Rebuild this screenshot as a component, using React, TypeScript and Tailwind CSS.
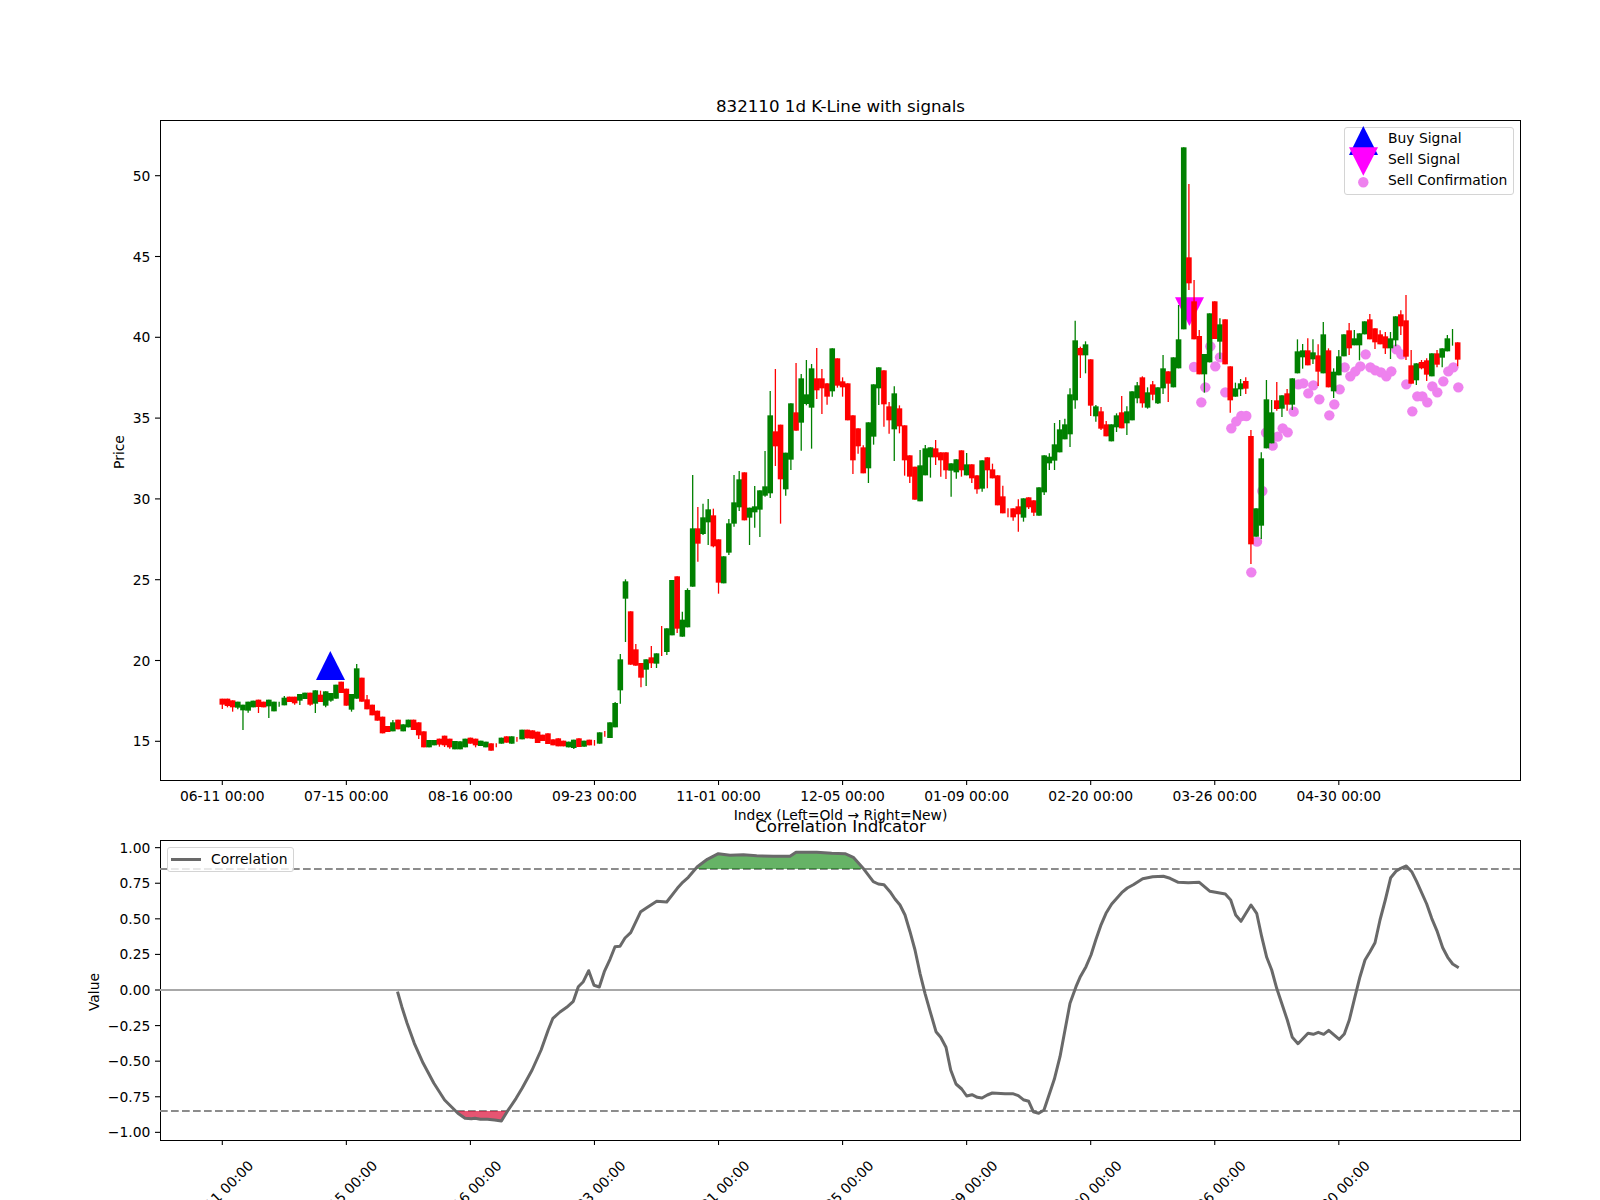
import React from 'react';

type Row = [string, number, number, number?, number?];
type Pt = [number, number];

const STEP = 5.169;
const X0 = 222.3;
const cx = (i: number) => X0 + STEP * i;

const TICK_X = [0, 24, 48, 72, 96, 120, 144, 168, 192, 216].map(cx);
const DATES = [
  '06-11 00:00', '07-15 00:00', '08-16 00:00', '09-23 00:00', '11-01 00:00',
  '12-05 00:00', '01-09 00:00', '02-20 00:00', '03-26 00:00', '04-30 00:00',
];

// rows are [colour, bodyTop, bodyBottom, wickTop, wickBottom], measured in chunks
const chunkA: Row[] = [
  ['r', 296, 314, 0, 327], ['r', 296, 318, 0, 322], ['r', 301, 322, 0, 335], ['g', 305, 323, 0, 328],
  ['g', 314, 331, 0, 390], ['g', 305, 332, 0, 338], ['g', 302, 322], ['r', 299, 321, 0, 339],
  ['r', 305, 322], ['g', 299, 319, 0, 354], ['g', 305, 334], ['g', 312, 312, 305, 320],
  ['g', 293, 316, 288], ['r', 290, 306], ['r', 290, 310, 0, 314], ['g', 282, 302, 0, 315],
  ['g', 278, 297], ['r', 278, 314, 0, 317], ['g', 271, 311, 0, 339], ['r', 284, 306, 272],
  ['g', 274, 317, 0, 322], ['g', 279, 302, 0, 305], ['g', 254, 296], ['r', 245, 279],
  ['r', 266, 317], ['g', 282, 329, 0, 335], ['g', 205, 296, 192], ['r', 233, 305],
  ['r', 298, 328, 285], ['r', 314, 346], ['r', 332, 362], ['r', 350, 400],
  ['r', 378, 396], ['g', 367, 394, 360], ['r', 359, 388], ['g', 373, 394],
  ['g', 359, 382], ['r', 359, 390], ['r', 367, 406, 0, 417], ['r', 394, 442],
  ['g', 420, 442], ['g', 420, 436], ['r', 416, 434, 0, 440], ['r', 407, 436, 0, 441],
  ['r', 416, 442, 0, 446], ['g', 423, 448], ['g', 424, 448], ['g', 416, 442],
  ['r', 413, 431], ['r', 416, 436, 0, 442], ['g', 422, 438], ['g', 425, 442],
  ['r', 430, 452], ['r', 436, 436, 430, 442], ['g', 413, 431], ['r', 409, 428],
  ['g', 409, 431], ['r', 418, 418, 411, 425], ['g', 389, 418], ['r', 389, 415],
  ['r', 391, 416], ['r', 395, 429], ['r', 404, 423], ['r', 400, 432],
  ['r', 418, 436], ['r', 415, 439], ['r', 422, 439], ['g', 425, 442],
  ['g', 419, 444, 0, 447], ['r', 415, 441], ['g', 422, 440], ['r', 419, 436],
  ['r', 428, 428, 420, 437], ['g', 397, 431], ['r', 401, 401, 393, 410], ['g', 367, 414],
  ['g', 309, 382, 306], ['g', 178, 271, 162, 311],
];
const chunkB: Row[] = [
  ['g', 34, 86, 28, 216], ['r', 124, 284], ['r', 238, 287, 222], ['r', 279, 323, 0, 352],
  ['g', 268, 299, 0, 348], ['r', 262, 280, 228, 294], ['g', 250, 281, 0, 294], ['r', 213, 213, 168, 258],
  ['g', 175, 246, 0, 255], ['g', 30, 196], ['r', 19, 176, 0, 189], ['g', 149, 200, 125],
  ['g', 60, 172, 55],
];
const chunkC: Row[] = [
  ['g', 565, 740, 405], ['r', 565, 611, 501, 665], ['g', 532, 582, 491, 585], ['g', 508, 547, 477, 615],
  ['r', 526, 619, 506, 622], ['r', 598, 728, 0, 761], ['g', 649, 730], ['g', 550, 638, 537, 645],
  ['g', 487, 551, 405, 560], ['g', 418, 502, 393, 513], ['r', 397, 541], ['g', 503, 533, 0, 615],
  ['g', 499, 517, 438, 563], ['g', 451, 509, 0, 591], ['g', 439, 467, 333, 470], ['g', 226, 460, 153, 474],
  ['r', 274, 319, 87, 378], ['r', 254, 418, 0, 551], ['g', 338, 448, 0, 467], ['g', 190, 359, 0, 390],
  ['r', 217, 272, 69], ['g', 115, 248, 102, 332], ['g', 163, 192, 60, 196], ['g', 85, 203, 72, 326],
  ['r', 115, 151, 24, 177], ['r', 115, 145, 87, 222], ['r', 130, 170, 0, 194], ['g', 25, 154, 0, 170],
  ['r', 55, 137, 0, 143], ['r', 124, 142, 112, 170], ['r', 130, 241], ['r', 226, 361, 0, 402],
  ['r', 265, 319, 0, 341], ['r', 322, 400, 316], ['g', 247, 385, 0, 429], ['g', 133, 290, 0, 314],
  ['g', 82, 145, 0, 195], ['r', 91, 193, 0, 260], ['r', 199, 241, 186, 281], ['g', 160, 268, 139, 363],
];
const chunkD: Row[] = [
  ['r', 325, 379, 316, 400], ['r', 376, 481, 0, 527], ['r', 466, 530, 0, 549], ['r', 500, 599],
  ['g', 496, 604, 450], ['g', 445, 526, 435], ['g', 442, 472, 0, 533], ['r', 445, 472, 420, 495],
  ['r', 457, 481, 0, 530], ['r', 457, 511, 0, 537], ['g', 490, 512, 0, 590], ['g', 478, 517, 0, 536],
  ['r', 451, 511, 0, 530], ['g', 493, 526, 459], ['r', 493, 535, 0, 549], ['r', 526, 568, 0, 581],
  ['g', 481, 566, 0, 575], ['r', 472, 511, 0, 565], ['r', 508, 535, 491], ['r', 526, 616],
  ['r', 589, 640, 557], ['r', 640, 640, 625, 652], ['r', 625, 652, 0, 662], ['r', 619, 643, 598, 695],
  ['g', 595, 653, 0, 665], ['r', 592, 622, 0, 627], ['r', 601, 638, 0, 648], ['g', 562, 647],
  ['g', 466, 577, 0, 585], ['g', 470, 490, 460, 510], ['g', 433, 482, 369, 510], ['g', 388, 457, 360],
  ['g', 373, 418, 356], ['g', 283, 403, 265, 441], ['g', 121, 301, 62, 326], ['r', 144, 166, 140, 234],
  ['g', 133, 166, 124, 220], ['r', 178, 317, 0, 348], ['g', 319, 349, 315, 365], ['r', 334, 386, 321, 390],
  ['r', 373, 409, 363], ['g', 373, 424], ['g', 346, 382, 340, 396], ['r', 337, 385, 288],
  ['g', 334, 370, 319, 405], ['g', 274, 361], ['g', 256, 295, 246, 310], ['r', 232, 310, 229, 323],
  ['g', 277, 323, 262, 326], ['r', 253, 284, 243, 301], ['g', 262, 310, 0, 312],
];
const chunkE: Row[] = [
  ['g', 745, 805, 705, 822], ['r', 754, 791, 0, 846], ['g', 712, 802], ['g', 658, 745, 555],
  ['g', 82, 628], ['r', 412, 490, 192, 510], ['r', 544, 658, 480],
];
const chunkF: Row[] = [
  ['r', 168, 283, 150], ['g', 222, 283, 0, 338], ['g', 100, 247], ['r', 64, 177],
  ['g', 133, 185, 115, 237], ['r', 118, 253], ['r', 259, 361, 0, 398], ['g', 325, 350, 308],
  ['g', 310, 328, 297, 348], ['r', 303, 326, 292, 342], ['r', 468, 793, 450, 852], ['g', 685, 770],
  ['g', 535, 737, 517, 777], ['g', 358, 505, 300], ['g', 397, 490, 360], ['r', 361, 387, 306, 392],
  ['g', 346, 386, 0, 411], ['r', 340, 374, 327, 392], ['g', 295, 374, 0, 390], ['g', 214, 280, 178],
  ['g', 211, 232, 192, 266], ['r', 211, 256, 175], ['g', 217, 238, 178, 252], ['r', 226, 275, 193, 318],
  ['g', 163, 280, 126], ['r', 211, 322, 205], ['g', 275, 334, 265, 354], ['g', 229, 286, 210],
  ['g', 163, 229], ['r', 151, 205, 129, 225], ['g', 175, 196, 150], ['g', 160, 196, 0, 241],
  ['g', 124, 163], ['r', 118, 178, 102], ['r', 145, 187, 0, 207], ['r', 163, 193, 151],
  ['r', 169, 205, 156, 222], ['g', 175, 205, 156, 237], ['g', 109, 181, 0, 199], ['r', 103, 139, 91, 165],
  ['r', 121, 230, 45, 240], ['r', 256, 311, 210], ['g', 250, 301, 0, 315], ['r', 246, 265, 240, 268],
  ['r', 241, 284, 235, 303], ['g', 220, 289], ['r', 220, 254, 210, 262], ['g', 205, 233, 0, 262],
  ['g', 175, 214, 165], ['g', 172, 172, 147, 197], ['r', 187, 239, 0, 259],
];

const scale = (rows: Row[], base: number): Row[] =>
  rows.map(([c, t, b, wt, wb]) => [
    c,
    base + t / 3,
    base + b / 3,
    base + (wt || t) / 3,
    base + (wb || b) / 3,
  ]);

const candles: Row[] = [
  ...scale(chunkA, 600),
  ...scale(chunkB, 570),
  ...scale(chunkC, 340),
  ...scale(chunkD, 300),
  ...scale(chunkE, 120),
  ...scale(chunkF, 280),
];

const sellDots: Pt[] = [
  [154, 877], [171, 785], [187, 633], [94, 445], [109, 424], [124, 408], [139, 408], [76, 337],
  [16, 322], [4, 367], [46, 259], [60, 232], [31, 199], [-18, 261], [198, 458], [218, 497],
  [233, 470], [248, 445], [263, 457], [281, 395], [295, 313], [310, 310], [325, 340], [340, 316],
  [358, 358], [388, 406], [403, 373], [419, 328], [434, 262], [451, 289], [466, 274], [481, 259],
  [497, 223], [511, 262], [526, 271], [543, 277], [559, 289], [574, 274], [589, 208], [604, 223],
  [619, 313], [637, 394], [652, 349], [667, 349], [682, 367], [697, 319], [712, 337], [730, 304],
  [745, 274], [760, 262], [775, 322],
];

const corrLeft: Pt[] = [
  [1113, 575], [1125, 620], [1140, 670], [1160, 730], [1185, 790], [1215, 850], [1245, 900],
  [1282, 940], [1302, 955], [1320, 956], [1330, 955], [1345, 958], [1365, 958], [1385, 960],
  [1404, 963], [1420, 935], [1445, 895], [1462, 865], [1490, 810], [1515, 750], [1535, 690],
  [1548, 655],
];
const corrMid: Pt[] = [
  [0, 636], [20, 622], [40, 604], [55, 560], [70, 545], [86, 512], [102, 556], [118, 561], [133, 515],
  [150, 478], [165, 440], [180, 439], [195, 414], [212, 398], [242, 335], [260, 323], [290, 304],
  [320, 306], [352, 265], [368, 247], [385, 232], [412, 200], [442, 178], [475, 161], [510, 166],
  [550, 164], [590, 167], [640, 169], [690, 169], [708, 157], [770, 157], [815, 160], [855, 161],
  [880, 172], [912, 208], [940, 245], [955, 252], [972, 254], [990, 275], [1005, 297], [1020, 315],
  [1035, 345], [1050, 395], [1065, 450], [1080, 520], [1095, 580], [1112, 640], [1128, 695],
  [1142, 712], [1158, 742], [1172, 810], [1188, 852], [1205, 867], [1220, 888], [1236, 884],
  [1252, 892], [1266, 894], [1282, 885], [1297, 879], [1335, 881], [1358, 881], [1375, 887],
  [1390, 899], [1406, 904], [1420, 935], [1436, 940], [1452, 930], [1483, 838], [1500, 770],
  [1515, 690], [1530, 610], [1548, 560],
];
const corrRight: Pt[] = [
  [0, 532], [18, 500], [33, 465], [48, 418], [62, 377], [78, 340], [95, 312], [125, 278], [142, 264],
  [160, 254], [188, 236], [218, 230], [250, 229], [270, 235], [295, 247], [325, 248], [358, 247],
  [390, 274], [436, 282], [452, 300], [467, 345], [483, 364], [513, 315], [530, 340], [545, 410],
  [560, 472], [575, 510], [590, 565], [605, 610], [622, 660], [637, 712], [654, 731], [684, 700],
  [700, 703], [715, 697], [731, 703], [746, 691], [778, 718], [793, 702], [808, 660], [825, 590],
  [840, 530], [855, 480], [870, 455], [885, 428], [900, 360], [916, 300], [932, 233], [948, 214],
  [962, 205], [979, 198], [995, 215], [1010, 245], [1040, 312], [1055, 355], [1072, 395], [1088, 443],
  [1103, 472], [1118, 492], [1136, 503],
];

const pts = (list: Pt[]) => list.map(([x, y]) => `${x.toFixed(1)},${y.toFixed(1)}`).join(' ');
const fromLeft = (p: Pt): Pt => [p[0] / 2.8, 800 + p[1] / 3];
const fromMid = (p: Pt): Pt => [560 + p[0] / 3, 800 + p[1] / 3];
const fromRight = (p: Pt): Pt => [1080 + p[0] / 3, 800 + p[1] / 3];

const corrLine = [...corrLeft.map(fromLeft), ...corrMid.map(fromMid), ...corrRight.map(fromRight)];

const greenFill: Pt[] = [
  [404, 207], [412, 200], [442, 178], [475, 161], [510, 166], [550, 164], [590, 167], [640, 169],
  [690, 169], [708, 157], [770, 157], [815, 160], [855, 161], [880, 172], [907, 207],
].map((p) => fromMid(p as Pt));
const redFill: Pt[] = [
  [1272, 933], [1282, 940], [1302, 955], [1320, 956], [1330, 955], [1345, 958], [1365, 958],
  [1385, 960], [1404, 963], [1420, 933],
].map((p) => fromLeft(p as Pt));

const priceTicks = [15, 20, 25, 30, 35, 40, 45, 50];
const corrTicks = [1, 0.75, 0.5, 0.25, 0, -0.25, -0.5, -0.75, -1];
const priceY = (v: number) => 741.3 - (v - 15) * 16.16;
const corrY = (v: number) => 990 - v * 142.35;
const corrLabel = (v: number) => (v < 0 ? '\u2212' : '') + Math.abs(v).toFixed(2);

function PriceChart() {
  return (
    <svg width={1360} height={660} viewBox="160 120 1360 660" className="block overflow-visible -ml-px -mt-px">
      {sellDots.map(([x, y], i) => (
        <circle key={i} cx={1200 + x / 3} cy={280 + y / 3} r={5.2} fill="#ee82ee" />
      ))}
      <polygon points="330.3,651 316,680 345,680" fill="#0000ff" />
      <polygon points="1175,297.3 1204,297.3 1189.4,326" fill="#ff00ff" />
      {candles.map(([c, top, bot, wt, wb], i) => {
        const color = c === 'g' ? '#008000' : '#ff0000';
        return (
          <g key={i}>
            <line x1={cx(i)} x2={cx(i)} y1={wt} y2={wb} stroke={color} strokeWidth={1.3} />
            {bot > top && <rect x={cx(i) - 2.8} y={top} width={5.6} height={bot - top} fill={color} />}
          </g>
        );
      })}
      {priceTicks.map((v) => (
        <g key={v}>
          <line x1={155} x2={160} y1={priceY(v)} y2={priceY(v)} stroke="#000" strokeWidth={1.1} />
          <text x={150.3} y={priceY(v) + 5} textAnchor="end" fill="#000">{v}</text>
        </g>
      ))}
      {TICK_X.map((x, i) => (
        <g key={x}>
          <line x1={x} x2={x} y1={780} y2={785} stroke="#000" strokeWidth={1.1} />
          <text x={x} y={801} textAnchor="middle" fill="#000">{DATES[i]}</text>
        </g>
      ))}
      <text x={124} y={452} textAnchor="middle" fill="#000" transform="rotate(-90 124 452)">Price</text>
    </svg>
  );
}

function CorrelationChart() {
  return (
    <svg width={1360} height={300} viewBox="160 840 1360 300" className="block overflow-visible -ml-px -mt-px">
      <line x1={160} x2={1520} y1={869} y2={869} stroke="#8c8c8c" strokeWidth={2} strokeDasharray="7.7 3.3" />
      <line x1={160} x2={1520} y1={1111} y2={1111} stroke="#8c8c8c" strokeWidth={2} strokeDasharray="7.7 3.3" />
      <line x1={160} x2={1520} y1={990} y2={990} stroke="#a8a8a8" strokeWidth={2} />
      <polygon points={pts(greenFill)} fill="#008000" fillOpacity={0.6} />
      <polygon points={pts(redFill)} fill="#dc143c" fillOpacity={0.72} />
      <polyline points={pts(corrLine)} fill="none" stroke="#696969" strokeWidth={3} strokeLinejoin="round" />
      {corrTicks.map((v) => (
        <g key={v}>
          <line x1={155} x2={160} y1={corrY(v)} y2={corrY(v)} stroke="#000" strokeWidth={1.1} />
          <text x={150.3} y={corrY(v) + 5} textAnchor="end" fill="#000">{corrLabel(v)}</text>
        </g>
      ))}
      {TICK_X.map((x, i) => (
        <g key={x}>
          <line x1={x} x2={x} y1={1140} y2={1145} stroke="#000" strokeWidth={1.1} />
          <text x={x - 1.5} y={1198} textAnchor="middle" fill="#000" transform={`rotate(-45 ${x - 1.5} 1193)`}>{DATES[i]}</text>
        </g>
      ))}
      <text x={99} y={992} textAnchor="middle" fill="#000" transform="rotate(-90 99 992)">Value</text>
    </svg>
  );
}

function SignalLegend() {
  return (
    <div className="absolute left-[1183px] top-[6px] w-[170px] h-[68px] box-border border border-[#d4d4d4] rounded-[3px] bg-white/80">
      <svg width={40} height={66} viewBox="1345 128 40 66" className="absolute left-0 top-0 overflow-visible">
        <polygon points="1363.3,126 1349,155 1378,155" fill="#0000ff" />
        <polygon points="1349,147.3 1378,147.3 1363.3,175.7" fill="#ff00ff" />
        <circle cx={1363.3} cy={182.3} r={5.2} fill="#ee82ee" />
      </svg>
      <div className="flex flex-col pl-[43px]">
        <div className="h-[21px] leading-[20px]">Buy Signal</div>
        <div className="h-[21px] leading-[20px]">Sell Signal</div>
        <div className="h-[21px] leading-[20px]">Sell Confirmation</div>
      </div>
    </div>
  );
}

export default function App() {
  return (
    <div className="w-[1600px] h-[1200px] overflow-hidden bg-white text-black text-[13.89px] font-['DejaVu_Sans',sans-serif]">
      <div className="ml-[160px] w-[1361px] flex flex-col">
        <div className="mt-[97px] h-[23px] leading-[20px] text-center text-[16.67px]">832110 1d K-Line with signals</div>
        <div className="relative w-[1361px] h-[661px] box-border border border-black">
          <PriceChart />
          <SignalLegend />
        </div>
        <div className="mt-[26px] h-[16px] leading-[16px] text-center">Index (Left=Old → Right=New)</div>
        <div className="-mt-[6px] h-[23px] leading-[20px] text-center text-[16.67px]">Correlation Indicator</div>
        <div className="relative w-[1361px] h-[301px] box-border border border-black">
          <CorrelationChart />
          <div className="absolute left-[6px] top-[6px] w-[127px] h-[25px] box-border border border-[#d4d4d4] rounded-[3px] bg-white/80 flex items-center pl-[3px] gap-[10px]">
            <div className="w-[30px] h-[3px] bg-[#696969]" />
            <span>Correlation</span>
          </div>
        </div>
      </div>
    </div>
  );
}
